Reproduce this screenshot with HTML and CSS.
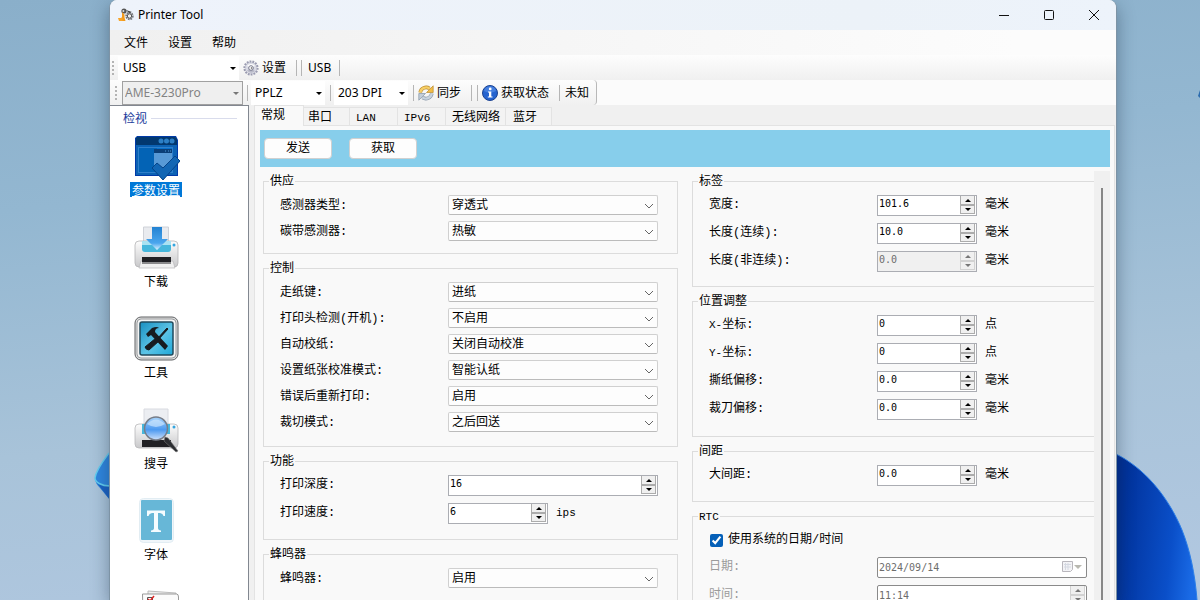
FILE: index.html
```html
<!DOCTYPE html>
<html lang="zh-CN">
<head>
<meta charset="utf-8">
<title>Printer Tool</title>
<link rel="stylesheet" href="styles.css">
</head>
<body>
<svg class="wallpaper-left" viewBox="0 0 16 48" aria-hidden="true">
  <path d="M16 0C10 8 2 18 1 26c0 4 2 7 5 10l10 12z" fill="#2f86de"/>
  <path d="M3 31l13 17V34z" fill="#1b62c4"/>
  <path d="M15 1C9 9 2 18 1 26c0 4 6 8 15 8" fill="none" stroke="#62cdf0" stroke-width="1.5"/>
</svg>
<svg class="wallpaper-right" viewBox="0 0 84 148" aria-hidden="true">
  <defs><linearGradient id="petal" x1="0" y1="0.4" x2="1" y2="0.6"><stop offset="0" stop-color="#002f96"/><stop offset="0.7" stop-color="#0a4fc9"/><stop offset="1" stop-color="#1a6be6"/></linearGradient></defs>
  <path d="M0 2C28 16 52 44 66 78c8 20 13 44 15 70H0z" fill="url(#petal)"/>
  <path d="M0 2C28 16 52 44 66 78c8 20 13 44 15 70" fill="none" stroke="#2c7fe8" stroke-width="1"/>
</svg>
<svg class="wallpaper-edge" viewBox="0 0 2 8" aria-hidden="true"><path d="M2 0v8L0 6z" fill="#2c6cae"/></svg>
<main class="window">
  <header class="titlebar">
    <svg class="app-icon" viewBox="0 0 16 16" aria-hidden="true">
      <circle cx="6" cy="4" r="2.6" fill="#555"/><circle cx="5.4" cy="4" r="1" fill="#ddd"/>
      <circle cx="11.5" cy="9" r="3.2" fill="none" stroke="#77787c" stroke-width="2" stroke-dasharray="1.6 .8"/>
      <circle cx="11.5" cy="9" r="2.2" fill="#eee" stroke="#555"/>
      <path d="M8 3l6 2-3 1z" fill="#444"/><path d="M4 5l2.500 2.500v3l1 3.500H1l3-4z" fill="#f39a1c"/><path d="M0 11h4.500v3H1z" fill="#f7a52b"/>
    </svg>
    <h1 class="title">Printer Tool</h1>
    <div class="window-buttons">
      <button type="button" aria-label="最小化"><svg viewBox="0 0 12 12"><path d="M1 6.5h10"/></svg></button>
      <button type="button" aria-label="最大化"><svg viewBox="0 0 12 12"><rect x="1.5" y="1.5" width="9" height="9" rx="1"/></svg></button>
      <button type="button" aria-label="关闭"><svg viewBox="0 0 12 12"><path d="M1 1l10 10M11 1L1 11"/></svg></button>
    </div>
  </header>
  <nav class="menubar">
    <button type="button">文件</button><button type="button">设置</button><button type="button">帮助</button>
  </nav>
  <div class="toolbar toolbar-port">
    <span class="grip"></span>
    <div class="combo combo-port"><select aria-label="端口"><option>USB</option></select><span class="arrow"></span></div>
    <button type="button" class="tool">
      <svg viewBox="0 0 16 16" aria-hidden="true"><circle cx="8" cy="8" r="6.4" fill="#cfd0da" stroke="#9a9bb0" stroke-width="2.4" stroke-dasharray="1.7 1.1"/><circle cx="8" cy="8" r="5.6" fill="#d9dae4"/><path d="M4 6a5 5 0 018 0L8 8z" fill="#fff"/><path d="M4 10.500a5 5 0 008 .5L8 8z" fill="#b9bac8"/><circle cx="8" cy="8" r="2.3" fill="#fff" stroke="#77788c"/><circle cx="8.500" cy="8" r=".8" fill="#555"/></svg>
      设置
    </button>
    <span class="sep sep-wide"></span><span class="sep"></span>
    <span class="status">USB</span><span class="sep"></span>
  </div>
  <div class="toolbar-row">
    <div class="toolbar toolbar-model">
      <span class="grip"></span>
      <div class="combo combo-model"><select aria-label="型号" disabled><option>AME-3230Pro</option></select><span class="arrow"></span></div>
      <span class="sep"></span>
      <div class="combo combo-small"><select aria-label="语言"><option>PPLZ</option></select><span class="arrow"></span></div>
      <span class="sep"></span>
      <div class="combo combo-small"><select aria-label="分辨率"><option>203 DPI</option></select><span class="arrow"></span></div>
      <span class="sep"></span>
      <button type="button" class="tool">
        <svg viewBox="0 0 16 16" aria-hidden="true"><path d="M2.200 7.500A6 6 0 0111.500 3.500" fill="none" stroke="#b98a2f" stroke-width="3.600"/><path d="M15.200 .8v6.700H8.500z" fill="#f2bd46" stroke="#b98a2f" stroke-width=".7"/><path d="M2.200 7.500A6 6 0 0111.500 3.500" fill="none" stroke="#f7cf66" stroke-width="2.400"/><path d="M13.800 8.500A6 6 0 014.500 12.500" fill="none" stroke="#8393a5" stroke-width="3.600"/><path d="M.8 15.200V8.500h6.700z" fill="#c3ceda" stroke="#8393a5" stroke-width=".7"/><path d="M13.800 8.500A6 6 0 014.500 12.500" fill="none" stroke="#c8d3df" stroke-width="2.400"/></svg>
        同步
      </button>
      <span class="sep sep-wide"></span><span class="sep sep-pair"></span>
      <button type="button" class="tool">
        <svg viewBox="0 0 16 16" aria-hidden="true"><circle cx="8" cy="8" r="7.500" fill="#2563cf" stroke="#1c4391"/><path d="M2 6a6.200 6.200 0 0112 0c-4 2-8 2-12 0z" fill="#5b92ea" opacity=".6"/><circle cx="8.200" cy="3.900" r="1.400" fill="#fff"/><path d="M6 6.500h3.300v5h1.200v1H5.800v-1H7v-4H6z" fill="#fff"/></svg>
        获取状态
      </button>
      <span class="sep sep-wide"></span>
      <span class="status">未知</span>
    </div>
  </div>
  <div class="workspace">
    <aside class="sidebar">
      <h2 class="sidebar-title">检视</h2>
      <a href="#params" class="nav-item selected">
        <svg viewBox="0 0 48 48" aria-hidden="true"><path d="M5 2h39l2 4v36H3V4z" fill="#003aa8"/><path d="M5 3h38l2 3v35H4V4z" fill="#0c62b4"/><path d="M4 4l1-1h38l2 2v6H4z" fill="#02386f"/><path d="M6 13h35v26H6z" fill="#2f7fca"/><path d="M7 14h33v24H7z" fill="#0870cc"/><path d="M7 14h18v24H7z" fill="#0363b5"/><path d="M22 15h18v18H22z" fill="#5799d6"/><path d="M22 15h18v4H22z" fill="#0b3f78"/><g fill="#2c7fc6"><circle cx="29" cy="7" r="2.500"/><circle cx="34.500" cy="7" r="2.500"/><circle cx="40" cy="7" r="2.500"/></g><path d="M33 17h1m2 0h1m1 0h1" stroke="#4d96d6"/><path d="M20 34l5-5 6 5 12-12 5 5-17 19z" fill="#1266b4" stroke="#064489"/></svg>
        <span>参数设置</span>
      </a>
      <a href="#download" class="nav-item">
        <svg viewBox="0 0 48 48" aria-hidden="true"><defs><linearGradient id="body" x1="0" y1="0" x2="0" y2="1"><stop offset="0" stop-color="#fdfdfd"/><stop offset="1" stop-color="#c9c9cb"/></linearGradient><linearGradient id="arr" x1="0" y1="0" x2="0" y2="1"><stop offset="0" stop-color="#2382d2"/><stop offset=".7" stop-color="#4aa6ee"/><stop offset="1" stop-color="#e0f3ff"/></linearGradient></defs><path d="M11.500 2h25v16h-25z" fill="#e9ebef" stroke="#cfd2d8"/><rect x="3" y="16" width="43" height="26" rx="4" fill="url(#body)" stroke="#b4b4b6" stroke-width=".8"/><path d="M10 16h29v8q0 3-3 3H13q-3 0-3-3z" fill="#46b7dc"/><path d="M10 16h29v4H10z" fill="#a9e2f2"/><path d="M9 36h32l2 7H7z" fill="#f0f0f0" stroke="#b8b8ba" stroke-width=".7"/><path d="M10 32h29v7H10z" fill="#202024"/><path d="M10 37h29v2H10z" fill="#8a8a8c"/><path d="M20 2h10v12h6L25 25 14 14h6z" fill="url(#arr)"/><circle cx="42" cy="20" r="1.500" fill="#35a6e0"/></svg>
        <span>下载</span>
      </a>
      <a href="#tools" class="nav-item">
        <svg viewBox="0 0 48 48" aria-hidden="true"><defs><linearGradient id="tl" x1="0" y1="0" x2="1" y2="1"><stop offset="0" stop-color="#1a8fc0"/><stop offset=".55" stop-color="#5cc4e6"/><stop offset="1" stop-color="#1fa8d8"/></linearGradient></defs><rect x="3" y="1" width="43" height="43" rx="6" fill="#ddd" stroke="#606265"/><rect x="5" y="3" width="39" height="39" rx="4" fill="#f4f4f4" stroke="#9c9ea0"/><rect x="8" y="6" width="33" height="33" rx="2" fill="url(#tl)" stroke="#214a5c" stroke-width="1.500"/><path d="M14 18l6-6q5-2 7 0-4 0-4 4l13 14-3 4-14-15-3 2z" fill="#171c20"/><path d="M35 12l1 1-10 11-1-1zM24 22l3 3-10 9q-3 0-4-3z" fill="#171c20" stroke="#171c20"/></svg>
        <span>工具</span>
      </a>
      <a href="#search" class="nav-item">
        <svg viewBox="0 0 48 48" aria-hidden="true"><defs><linearGradient id="lens" x1="0" y1="0" x2="0" y2="1"><stop offset="0" stop-color="#a9d4fa"/><stop offset=".55" stop-color="#4c99f0"/><stop offset="1" stop-color="#cfe2fb"/></linearGradient></defs><path d="M12 2h24v16H12z" fill="#eceef2" stroke="#d8dae0"/><rect x="3" y="17" width="43" height="24" rx="4" fill="url(#body)" stroke="#b8b8ba" stroke-width=".8"/><path d="M10 17h28v10H10z" fill="#46b7dc"/><path d="M10 33h29v7H10z" fill="#202024"/><circle cx="42" cy="20" r="1.500" fill="#35a6e0"/><path d="M33 30l3 1 10 13-2 1-12-11z" fill="#2b2d31" stroke="#777" stroke-width=".6"/><circle cx="24" cy="21.500" r="11.500" fill="url(#lens)" stroke="#777d88" stroke-width="1.500"/><path d="M15 17q9-9 18 0-9 6-18 0z" fill="#d9edff" opacity=".6"/></svg>
        <span>搜寻</span>
      </a>
      <a href="#fonts" class="nav-item">
        <svg viewBox="0 0 48 48" aria-hidden="true"><rect x="7.500" y=".5" width="34" height="44" rx="4" fill="#f0f6fa" stroke="#e2edf3"/><rect x="9" y="2" width="31" height="40" rx="1" fill="#67b7d7"/><path d="M15 12.500h18v5.500h-1.500q-.5-2.500-3.500-3h-2v15q0 2 3 2.500V34H19v-1.500q3-.5 3-2.500V15h-2q-3 .5-3.500 3H15z" fill="#f5fcff"/></svg>
        <span>字体</span>
      </a>
      <a href="#list" class="nav-item" aria-label="清单">
        <svg viewBox="0 0 48 48" aria-hidden="true"><path d="M16 2l28 2v44H16z" fill="#eee" stroke="#bbb"/><path d="M10.500 5h34q2 0 2 3v40h-35z" fill="#fbfbfb" stroke="#999"/><path d="M15.500 8.500h5v5h-5z" fill="#fff" stroke="#555"/><path d="M16 10l2 2 4-5" fill="none" stroke="#d22" stroke-width="1.500"/></svg>
      </a>
    </aside>
    <section class="content">
      <div class="tabs" role="tablist">
        <button type="button" role="tab" aria-selected="true" class="tab active">常规</button>
        <button type="button" role="tab" class="tab">串口</button>
        <button type="button" role="tab" class="tab tab-latin">LAN</button>
        <button type="button" role="tab" class="tab tab-latin">IPv6</button>
        <button type="button" role="tab" class="tab tab-roomy">无线网络</button>
        <button type="button" role="tab" class="tab tab-roomy">蓝牙</button>
      </div>
      <div class="page" role="tabpanel">
        <div class="actions"><button type="button">发送</button><button type="button">获取</button></div>
        <div class="scroller">
          <form class="form">
            <div class="column">
              <fieldset class="pad-s">
                <legend>供应</legend>
                <div class="row"><label for="sensor">感测器类型:</label><div class="select"><select id="sensor"><option>穿透式</option></select><svg viewBox="0 0 10 6"><path d="M1 1l4 4 4-4"/></svg></div></div>
                <div class="row"><label for="ribbon">碳带感测器:</label><div class="select"><select id="ribbon"><option>热敏</option></select><svg viewBox="0 0 10 6"><path d="M1 1l4 4 4-4"/></svg></div></div>
              </fieldset>
              <fieldset>
                <legend>控制</legend>
                <div class="row"><label for="feed">走纸键:</label><div class="select"><select id="feed"><option>进纸</option></select><svg viewBox="0 0 10 6"><path d="M1 1l4 4 4-4"/></svg></div></div>
                <div class="row"><label for="head">打印头检测(开机):</label><div class="select"><select id="head"><option>不启用</option></select><svg viewBox="0 0 10 6"><path d="M1 1l4 4 4-4"/></svg></div></div>
                <div class="row"><label for="autocal">自动校纸:</label><div class="select"><select id="autocal"><option>关闭自动校准</option></select><svg viewBox="0 0 10 6"><path d="M1 1l4 4 4-4"/></svg></div></div>
                <div class="row"><label for="calmode">设置纸张校准模式:</label><div class="select"><select id="calmode"><option>智能认纸</option></select><svg viewBox="0 0 10 6"><path d="M1 1l4 4 4-4"/></svg></div></div>
                <div class="row"><label for="reprint">错误后重新打印:</label><div class="select"><select id="reprint"><option>启用</option></select><svg viewBox="0 0 10 6"><path d="M1 1l4 4 4-4"/></svg></div></div>
                <div class="row"><label for="cut">裁切模式:</label><div class="select"><select id="cut"><option>之后回送</option></select><svg viewBox="0 0 10 6"><path d="M1 1l4 4 4-4"/></svg></div></div>
              </fieldset>
              <fieldset class="spins pad-m">
                <legend>功能</legend>
                <div class="row"><label for="dark">打印深度:</label><div class="spin"><input id="dark" value="16"><span class="steps"><button type="button" aria-label="增加"></button><button type="button" aria-label="减少"></button></span></div></div>
                <div class="row unit-row"><label for="speed">打印速度:</label><div class="spin"><input id="speed" value="6"><span class="steps"><button type="button" aria-label="增加"></button><button type="button" aria-label="减少"></button></span></div><span class="latin">ips</span></div>
              </fieldset>
              <fieldset>
                <legend>蜂鸣器</legend>
                <div class="row"><label for="buzzer">蜂鸣器:</label><div class="select"><select id="buzzer"><option>启用</option></select><svg viewBox="0 0 10 6"><path d="M1 1l4 4 4-4"/></svg></div></div>
              </fieldset>
            </div>
            <div class="column">
              <fieldset class="spins">
                <legend>标签</legend>
                <div class="row unit-row"><label for="width">宽度:</label><div class="spin"><input id="width" value="101.6"><span class="steps"><button type="button" aria-label="增加"></button><button type="button" aria-label="减少"></button></span></div><span>毫米</span></div>
                <div class="row unit-row"><label for="len1">长度(连续):</label><div class="spin"><input id="len1" value="10.0"><span class="steps"><button type="button" aria-label="增加"></button><button type="button" aria-label="减少"></button></span></div><span>毫米</span></div>
                <div class="row unit-row"><label for="len2">长度(非连续):</label><div class="spin disabled"><input id="len2" value="0.0" disabled><span class="steps"><button type="button" aria-label="增加" disabled></button><button type="button" aria-label="减少" disabled></button></span></div><span>毫米</span></div>
              </fieldset>
              <fieldset class="spins pad-l">
                <legend>位置调整</legend>
                <div class="row unit-row"><label for="posx"><span class="latin">X-</span>坐标:</label><div class="spin"><input id="posx" value="0"><span class="steps"><button type="button" aria-label="增加"></button><button type="button" aria-label="减少"></button></span></div><span>点</span></div>
                <div class="row unit-row"><label for="posy"><span class="latin">Y-</span>坐标:</label><div class="spin"><input id="posy" value="0"><span class="steps"><button type="button" aria-label="增加"></button><button type="button" aria-label="减少"></button></span></div><span>点</span></div>
                <div class="row unit-row"><label for="tear">撕纸偏移:</label><div class="spin"><input id="tear" value="0.0"><span class="steps"><button type="button" aria-label="增加"></button><button type="button" aria-label="减少"></button></span></div><span>毫米</span></div>
                <div class="row unit-row"><label for="cutoff">裁刀偏移:</label><div class="spin"><input id="cutoff" value="0.0"><span class="steps"><button type="button" aria-label="增加"></button><button type="button" aria-label="减少"></button></span></div><span>毫米</span></div>
              </fieldset>
              <fieldset class="spins pad-m">
                <legend>间距</legend>
                <div class="row unit-row"><label for="gap">大间距:</label><div class="spin"><input id="gap" value="0.0"><span class="steps"><button type="button" aria-label="增加"></button><button type="button" aria-label="减少"></button></span></div><span>毫米</span></div>
              </fieldset>
              <fieldset class="spins">
                <legend class="latin">RTC</legend>
                <div class="check-row"><input type="checkbox" id="systime" checked><label for="systime">使用系统的日期/时间</label></div>
                <div class="row muted"><label for="date">日期:</label><div class="spin dark"><input id="date" value="2024/09/14" disabled>
                  <svg class="calendar" viewBox="0 0 24 14" aria-hidden="true"><path d="M1.500 1.500h10v8l-2 2h-8z" fill="#f3f3f6" stroke="#b9b7bd"/><path d="M3 4.500h7M3 7h7M4.500 3v7M7 3v7" stroke="#d5d9e2" fill="none"/><path d="M13 5h8l-4 4z" fill="#b8b8b0"/></svg></div></div>
                <div class="row muted"><label for="time">时间:</label><div class="spin dark"><input id="time" value="11:14" disabled><span class="steps"><button type="button" aria-label="增加" disabled></button><button type="button" aria-label="减少" disabled></button></span></div></div>
              </fieldset>
            </div>
          </form>
          <div class="scrollbar"><span class="thumb"></span></div>
        </div>
      </div>
    </section>
  </div>
</main>
</body>
</html>
```
FILE: styles.css
```css
* { box-sizing: border-box; }

body {
  margin: 0;
  height: 100vh;
  overflow: hidden;
  display: flex;
  padding: 0 83px 0 109px;
  background: linear-gradient(175deg, #8aafca 0%, #93b7d1 30%, #a8c3d9 65%, #b2c8e1 100%);
  font: 12px/16px "Noto Sans", "Noto Sans CJK SC", sans-serif;
  color: #000;
}

button, select, input { font: inherit; color: inherit; margin: 0; }
button { border: 0; padding: 0; background: none; white-space: nowrap; }
svg { display: block; }

.wallpaper-left { position: absolute; left: 94px; top: 452px; width: 16px; height: 48px; }
.wallpaper-right { position: absolute; right: 0; bottom: 0; width: 84px; height: 148px; }
.wallpaper-edge { position: absolute; right: 0; top: 90px; width: 2px; height: 8px; }

.window {
  position: relative;
  flex: 1;
  min-width: 0;
  display: flex;
  flex-direction: column;
  overflow: hidden;
  background: #f0f0f0;
  border: solid #7d93a5;
  border-width: 0 1px;
  border-radius: 8px 8px 0 0;
  box-shadow: 0 6px 18px rgba(20, 40, 60, .4);
}

/* Title bar and menu */
.titlebar { height: 30px; flex: none; display: flex; align-items: center; padding-left: 8px; background: linear-gradient(90deg, #eef3fb, #ecf2f8 75%, #edf3fb); }
.app-icon { width: 16px; height: 16px; margin-right: 4px; }
.title { flex: 1; margin: 0; font-size: 12px; font-weight: 400; }
.window-buttons { display: flex; }
.window-buttons button { width: 45px; height: 30px; display: grid; place-items: center; }
.window-buttons svg { width: 12px; height: 12px; fill: none; stroke: #111; }
.menubar { height: 25px; flex: none; display: flex; align-items: center; gap: 20px; padding-left: 14px; background: linear-gradient(90deg, #f0f0f0, #fcfcfc 90%); }

/* Toolbars */
.toolbar { height: 25px; flex: none; display: flex; align-items: center; background: linear-gradient(#fdfdfd, #f0f0f0); }
.toolbar-port { padding-left: 2px; border-radius: 0 0 4px 0; }
.toolbar-row { flex: none; display: flex; background: #fbfbfb; }
.toolbar-model { padding-left: 5px; padding-right: 7px; border-right: 1px solid #b8b8b8; border-radius: 0 4px 4px 0; }
.grip { width: 2px; height: 14px; background: repeating-linear-gradient(#b4b4b4 0 2px, transparent 2px 4px); }
.combo { position: relative; height: 24px; margin-left: 4px; background: #fff; }
.combo select { appearance: none; width: 100%; height: 24px; padding: 0 0 0 4px; border: 0; background: transparent; opacity: 1; }
.combo .arrow { position: absolute; right: 3px; top: 11px; border: 3px solid transparent; border-top-color: #000; border-bottom: 0; pointer-events: none; }
.combo-port { width: 121px; }
.combo-port select { padding-left: 5px; }
.combo-model { width: 121px; border: 1px solid #a0a0a0; background: #efefef; color: #838383; margin-left: 5px; }
.combo-model select { height: 22px; padding-left: 2px; }
.combo-model .arrow { top: 10px; border-top-color: #777; }
.combo-small { width: 74px; margin-left: 3px; }
.combo-small + .sep { margin-left: 5px; }
.sep { width: 1px; height: 16px; margin-left: 4px; background: #b5b5b5; }
.tool { display: flex; align-items: center; gap: 3px; margin-left: 4px; }
.tool svg { width: 16px; height: 16px; }
.sep-wide { margin-left: 10px; }
.sep-pair { margin-left: 5px; }
.status { margin-left: 5px; }
.toolbar-port .status { margin-left: 6px; }
.status + .sep { margin-left: 8px; }

/* Navigation */
.workspace { flex: 1; min-height: 0; display: flex; }
.sidebar { width: 139px; flex: none; overflow: hidden; background: #fff; border: solid #828790; border-width: 1px 1px 0 0; font-family: "Noto Sans CJK SC", sans-serif; }
.sidebar-title { display: flex; align-items: center; gap: 4px; margin: 4px 11px 8px 13px; font-size: 12px; line-height: 16px; font-weight: 400; color: #1a3b9c; }
.sidebar-title::after { content: ""; flex: 1; height: 1px; background: #d9dcec; }
.nav-item { width: 92px; height: 91px; display: flex; flex-direction: column; align-items: center; color: #000; text-decoration: none; }
.nav-item svg { width: 48px; height: 48px; }
.nav-item span { padding: 0 2px; line-height: 15px; }
.selected span { background: #0078d7; color: #fff; text-decoration: underline; }

/* Tabs */
.content { flex: 1; min-width: 0; display: flex; flex-direction: column; padding: 0 1px 0 5px; font-family: "Liberation Mono", "Noto Sans CJK SC", monospace; }
.tabs { height: 20px; flex: none; display: flex; align-items: flex-end; }
.tab { min-width: 46px; height: 18px; padding: 2px 5px 0 4px; border: solid #e3e3e3; border-width: 1px 1px 0 0; background: #f3f3f3; text-align: left; }
.tab-latin { min-width: 48px; padding-left: 6px; font-size: 11px; }
.tab-roomy { padding-left: 6px; }
.tab.active { position: relative; min-width: 50px; height: 21px; padding: 0 4px 0 6px; margin-bottom: -1px; border-width: 1px; border-bottom: 0; background: #f9f9f9; }
.page { flex: 1; min-height: 0; display: flex; flex-direction: column; padding: 4px 4px 0 5px; border: 1px solid #e3e3e3; border-bottom: 0; background: #f9f9f9; }
.actions { height: 37px; flex: none; display: flex; gap: 17px; padding: 8px 4px; background: #87ceeb; }
.actions button { width: 68px; height: 21px; padding-top: 1px; border: 1px solid #d0d0d0; border-radius: 4px; background: #fdfdfd; }
.tab-roomy + .tab-roomy { padding-left: 7px; }

/* Form */
.scroller { flex: 1; min-height: 0; display: flex; margin-top: 4px; overflow: hidden; }
.form { flex: 1; min-width: 0; display: grid; grid-template-columns: 1fr 1fr; align-items: start; gap: 14px; margin-right: -13px; padding: 2px 0 0 3px; line-height: 18px; }
.column { display: grid; gap: 6px; min-width: 0; }
fieldset { display: grid; gap: 6px; min-width: 0; margin: 0; padding: 6px 19px 14px 16px; border: 1px solid #dcdcdc; }
fieldset.spins { gap: 7px; }
fieldset.pad-s { padding-bottom: 12px; }
fieldset.pad-m { padding-bottom: 15px; }
fieldset.pad-l { padding-bottom: 16px; }
legend { height: 16px; margin-left: -11px; padding: 0 1px; }
.row { display: grid; grid-template-columns: 168px 1fr; align-items: center; line-height: 20px; }
.row label { padding-top: 1px; margin-bottom: -1px; }
.spins .row { align-items: start; }
.spins .row label { padding-top: 0; margin-bottom: 0; }
.unit-row { grid-template-columns: 168px 100px 1fr; }
.unit-row > :last-child { margin-left: 8px; }
.latin { font-size: 11px; }
.select { position: relative; height: 20px; }
.select select { appearance: none; width: 100%; height: 20px; padding: 2px 24px 0 3px; border: 1px solid #d0d0d0; border-bottom-color: #bbb; border-radius: 2px; background: #fdfdfd; line-height: 16px; }
.select svg { position: absolute; right: 4px; top: 8px; width: 10px; height: 6px; fill: none; stroke: #666; pointer-events: none; }
.spin { height: 21px; display: flex; border: 1px solid #abadb3; background: #fff; }
.spin input { flex: 1; min-width: 0; width: 0; border: 0; padding: 0 0 3px 1px; background: transparent; font: 10px/16px "DejaVu Sans Mono", monospace; }
.steps { width: 15px; display: grid; grid-template-rows: 9px 9px; margin-right: 1px; }
.steps button { display: grid; place-items: center; background: #f0f0f0; border: 1px solid #acacac; border-top: 0; }
.steps button::before { content: ""; border: 3px solid transparent; border-bottom-color: #000; border-top: 0; }
.steps button + button { border-top: 1px solid #acacac; }
.steps button + button::before { border-top: 3px solid #000; border-bottom: 0; }
.disabled { background: #f0f0f0; }
.spin input:disabled { color: #6d6d6d; }
.steps button:disabled { border-color: #d2d2d2; }
.steps button:disabled::before { border-bottom-color: #777; }
.steps button + button:disabled::before { border-top-color: #777; }
.dark { border-color: #8a8a8a; border-radius: 2px; }
.dark input { padding-bottom: 0; }
.muted { color: #9b9b9b; }
.calendar { width: 24px; height: 14px; margin: 2px 1px 0 0; }
.check-row { height: 20px; display: flex; align-items: center; gap: 5px; padding-left: 1px; }
.check-row input { width: 13px; height: 13px; accent-color: #0560b8; }
.scrollbar { position: relative; width: 16px; flex: none; padding: 17px 7px 0; background: #f0f0f0; }
.thumb { display: block; width: 2px; height: 100%; background: #868686; }
```
